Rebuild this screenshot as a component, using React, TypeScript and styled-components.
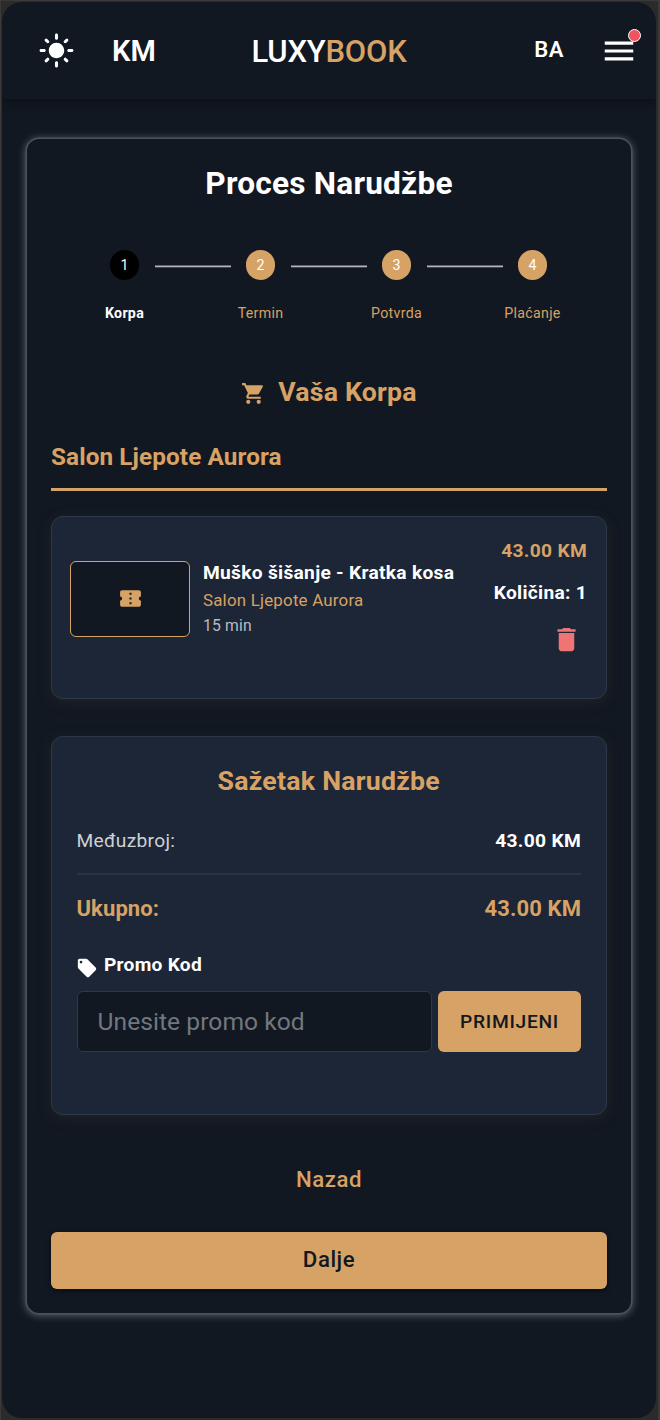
import React from "react";
import styled, { createGlobalStyle } from "styled-components";
import {
  MdConfirmationNumber,
  MdDelete,
  MdLightMode,
  MdLocalOffer,
  MdMenu,
  MdShoppingCart,
} from "react-icons/md";

const color = {
  frame: "#2b2b2b",
  bezel: "#3b3a39",
  page: "#111822",
  panel: "#1d2636",
  line: "#2d394b",
  gold: "#d7a265",
  white: "#ffffff",
  muted: "#b9bcc1",
  red: "#f07474",
};

const GlobalStyle = createGlobalStyle`
  * { box-sizing: border-box; }
  body { margin: 0; background: ${color.frame}; font-family: Roboto, "Liberation Sans", sans-serif; }
  h1, h2, h3, h4, p { margin: 0; }
  button, input { font-family: inherit; }
  svg { display: block; flex: none; }
`;

const Device = styled.div`
  width: 660px;
  height: 1420px;
  padding: 1px 2px 1px 1px;
  background: ${color.frame};
  border: solid ${color.bezel};
  border-width: 1px 2px 0 1px;
`;

const Screen = styled.div`
  width: 654px;
  height: 1416px;
  border-radius: 20px;
  background: ${color.page};
  overflow: hidden;
  display: flex;
  flex-direction: column;
  color: ${color.white};
`;

const Header = styled.header`
  height: 97px;
  flex: none;
  display: grid;
  grid-template-columns: 1fr auto 1fr;
  align-items: center;
  padding: 0 18px 0 36px;
  box-shadow: 0 3px 8px rgba(0, 0, 0, 0.35);
`;

const HeaderSide = styled.div<{ $end?: boolean }>`
  display: flex;
  align-items: center;
  gap: ${(p) => (p.$end ? 36 : 37)}px;
  justify-content: ${(p) => (p.$end ? "flex-end" : "flex-start")};
`;

const Currency = styled.span`
  font-size: 29px;
  line-height: 34px;
  font-weight: 600;
`;

const Language = styled.span`
  font-size: 22px;
  line-height: 26px;
  font-weight: 600;
  letter-spacing: 0.6px;
  margin-top: -2px;
`;

const Brand = styled.div`
  font-size: 31px;
  line-height: 36px;
  font-weight: 500;
  letter-spacing: -0.2px;
  margin: 2px 18px 0 0;
`;

const Accent = styled.span`
  color: ${color.gold};
`;

const MenuButton = styled.div`
  position: relative;
`;

const Dot = styled.i`
  position: absolute;
  right: -3px;
  top: -3px;
  width: 13px;
  height: 13px;
  border-radius: 50%;
  border: 1.5px solid ${color.white};
  background: #f0545c;
`;

const Card = styled.main`
  margin: 40px 25px 0 24.5px;
  height: 1174px;
  padding: 0 24px 0 24.5px;
  border-radius: 12px;
  background: ${color.page};
  box-shadow: 0 0 0 1.5px #4c525b, 0 1px 8px 1px rgba(255, 255, 255, 0.36);
  display: flex;
  flex-direction: column;
`;

const Title = styled.h1`
  margin-top: 26px;
  text-align: center;
  font-size: 31.6px;
  line-height: 38px;
  font-weight: 700;
  letter-spacing: 0.22px;
`;

const Stepper = styled.div`
  display: grid;
  grid-template-columns: repeat(4, 1fr);
  padding: 0 6.5px 0 5.5px;
  margin-top: 47px;
`;

const StepBox = styled.div`
  display: flex;
  flex-direction: column;
  align-items: center;
  gap: 23px;
`;

const Track = styled.div`
  align-self: stretch;
  display: flex;
  align-items: center;
  justify-content: space-between;
`;

const Connector = styled.i<{ $on: boolean }>`
  width: 38px;
  height: 3px;
  margin-top: 3px;
  background: ${(p) =>
    p.$on
      ? "linear-gradient(#62666d 0 1px, #b5b5b7 1px 2px, #41464e 2px)"
      : "transparent"};
`;

const Marker = styled.span<{ $active: boolean }>`
  width: 29.5px;
  height: 29.5px;
  border-radius: 50%;
  display: grid;
  place-items: center;
  font-size: 14.2px;
  background: ${(p) => (p.$active ? "#000" : color.gold)};
`;

const StepLabel = styled.span<{ $active: boolean }>`
  font-size: 14.2px;
  line-height: 20px;
  letter-spacing: 0.3px;
  font-weight: ${(p) => (p.$active ? 700 : 400)};
  color: ${(p) => (p.$active ? color.white : color.gold)};
`;

const CartHeading = styled.h2`
  margin-top: 53px;
  display: flex;
  align-items: center;
  justify-content: center;
  gap: 12px;
  color: ${color.gold};
  font-size: 26.7px;
  line-height: 32px;
  font-weight: 700;
  letter-spacing: 0.22px;
  svg { margin-top: 3px; }
`;

const SalonHeading = styled.h3`
  margin-top: 34px;
  padding-bottom: 16px;
  border-bottom: 3px solid ${color.gold};
  color: ${color.gold};
  font-size: 24.3px;
  line-height: 30px;
  font-weight: 700;
  letter-spacing: 0.1px;
`;

const Panel = styled.section`
  border: 1.5px solid ${color.line};
  border-radius: 12px;
  background: ${color.panel};
  box-shadow: 0 3px 14px rgba(70, 60, 45, 0.32);
`;

const Item = styled(Panel)`
  margin-top: 25px;
  height: 183px;
  padding: 0 19px 0 18.5px;
  display: flex;
`;

const Thumb = styled.div`
  margin-top: 44px;
  margin-left: -0.5px;
  width: 120px;
  height: 76px;
  border: 1.5px solid ${color.gold};
  border-radius: 6px;
  background: ${color.page};
  color: ${color.gold};
  display: grid;
  place-items: center;
`;

const ItemText = styled.div`
  margin: 42px 0 0 13px;
  flex: 1;
  white-space: nowrap;
`;

const ItemName = styled.h4`
  font-size: 19.2px;
  line-height: 28px;
  font-weight: 700;
  letter-spacing: 0.28px;
`;

const ItemSalon = styled.p`
  font-size: 16.9px;
  line-height: 27px;
  letter-spacing: 0.2px;
  color: ${color.gold};
`;

const ItemTime = styled.p`
  margin-top: -1px;
  font-size: 15.7px;
  line-height: 25px;
  letter-spacing: 0.2px;
  color: ${color.muted};
`;

const ItemSide = styled.div`
  margin-top: 20px;
  display: flex;
  flex-direction: column;
  align-items: flex-end;
`;

const Price = styled.span`
  font-size: 19.2px;
  line-height: 27px;
  font-weight: 700;
  letter-spacing: 0.3px;
  color: ${color.gold};
`;

const Quantity = styled.span`
  margin-top: 15px;
  font-size: 19.2px;
  line-height: 28px;
  font-weight: 700;
  letter-spacing: 0.28px;
`;

const Remove = styled.span`
  margin: 17px 5.5px 0 0;
  color: ${color.red};
`;

const Summary = styled(Panel)`
  margin-top: 37px;
  height: 379px;
  padding: 0 25px 0 24.5px;
`;

const SummaryTitle = styled.h2`
  margin-top: 27px;
  text-align: center;
  color: ${color.gold};
  font-size: 26.7px;
  line-height: 34px;
  font-weight: 700;
  letter-spacing: 0.25px;
`;

const Subtotal = styled.div`
  margin-top: 28px;
  padding-bottom: 17px;
  border-bottom: 2px solid #2a3344;
  display: flex;
  justify-content: space-between;
  font-size: 19.2px;
  line-height: 30px;
  letter-spacing: 0.3px;
  color: #ced1d5;
  strong { font-weight: 700; color: ${color.white}; }
`;

const Total = styled.div`
  margin-top: 18px;
  display: flex;
  justify-content: space-between;
  font-size: 22px;
  line-height: 32px;
  font-weight: 700;
  letter-spacing: 0.1px;
  color: ${color.gold};
`;

const PromoLabel = styled.div`
  margin-top: 26px;
  display: flex;
  align-items: flex-start;
  gap: 6px;
  font-size: 19.2px;
  line-height: 28px;
  font-weight: 700;
  letter-spacing: 0.25px;
  svg { margin: 6px 0 0 -0.5px; }
`;

const PromoRow = styled.div`
  margin-top: 12px;
  display: flex;
  gap: 6px;
`;

const PromoInput = styled.input`
  flex: 1;
  min-width: 0;
  height: 61px;
  padding: 0 20px;
  border: 1.5px solid ${color.line};
  border-radius: 6px;
  background: ${color.page};
  color: ${color.white};
  font-size: 24.6px;
  letter-spacing: 0.05px;
  outline: none;
  &::placeholder { color: #72777f; opacity: 1; }
`;

const Apply = styled.button`
  width: 143px;
  height: 61px;
  padding: 0;
  border: 0;
  border-radius: 6px;
  background: ${color.gold};
  color: ${color.page};
  font-size: 19.2px;
  font-weight: 500;
  letter-spacing: 0.7px;
`;

const Back = styled.button`
  margin-top: 45px;
  align-self: center;
  padding: 0;
  border: 0;
  background: none;
  color: ${color.gold};
  font-size: 22.2px;
  line-height: 38px;
  font-weight: 500;
  letter-spacing: 0.55px;
`;

const Next = styled.button`
  margin-top: 34px;
  height: 57px;
  flex: none;
  padding: 0 0 2px;
  border: 0;
  border-radius: 6px;
  background: ${color.gold};
  color: ${color.page};
  font-size: 22.2px;
  font-weight: 500;
  letter-spacing: 0.55px;
  box-shadow: 0 2px 5px rgba(0, 0, 0, 0.5);
`;

const steps = ["Korpa", "Termin", "Potvrda", "Plaćanje"];

export default function App() {
  return (
    <Device>
      <GlobalStyle />
      <Screen>
        <Header>
          <HeaderSide>
            <MdLightMode size={37} />
            <Currency>KM</Currency>
          </HeaderSide>
          <Brand>
            LUXY<Accent>BOOK</Accent>
          </Brand>
          <HeaderSide $end>
            <Language>BA</Language>
            <MenuButton>
              <MdMenu size={38} />
              <Dot />
            </MenuButton>
          </HeaderSide>
        </Header>
        <Card>
          <Title>Proces Narudžbe</Title>
          <Stepper>
            {steps.map((label, i) => (
              <StepBox key={label}>
                <Track>
                  <Connector $on={i > 0} />
                  <Marker $active={i === 0}>{i + 1}</Marker>
                  <Connector $on={i < steps.length - 1} />
                </Track>
                <StepLabel $active={i === 0}>{label}</StepLabel>
              </StepBox>
            ))}
          </Stepper>
          <CartHeading>
            <MdShoppingCart size={25} />
            Vaša Korpa
          </CartHeading>
          <SalonHeading>Salon Ljepote Aurora</SalonHeading>
          <Item>
            <Thumb>
              <MdConfirmationNumber size={25} />
            </Thumb>
            <ItemText>
              <ItemName>Muško šišanje - Kratka kosa</ItemName>
              <ItemSalon>Salon Ljepote Aurora</ItemSalon>
              <ItemTime>15 min</ItemTime>
            </ItemText>
            <ItemSide>
              <Price>43.00 KM</Price>
              <Quantity>Količina: 1</Quantity>
              <Remove>
                <MdDelete size={31} />
              </Remove>
            </ItemSide>
          </Item>
          <Summary>
            <SummaryTitle>Sažetak Narudžbe</SummaryTitle>
            <Subtotal>
              <span>Međuzbroj:</span>
              <strong>43.00 KM</strong>
            </Subtotal>
            <Total>
              <span>Ukupno:</span>
              <span>43.00 KM</span>
            </Total>
            <PromoLabel>
              <MdLocalOffer size={22} />
              Promo Kod
            </PromoLabel>
            <PromoRow>
              <PromoInput placeholder="Unesite promo kod" />
              <Apply>PRIMIJENI</Apply>
            </PromoRow>
          </Summary>
          <Back>Nazad</Back>
          <Next>Dalje</Next>
        </Card>
      </Screen>
    </Device>
  );
}
